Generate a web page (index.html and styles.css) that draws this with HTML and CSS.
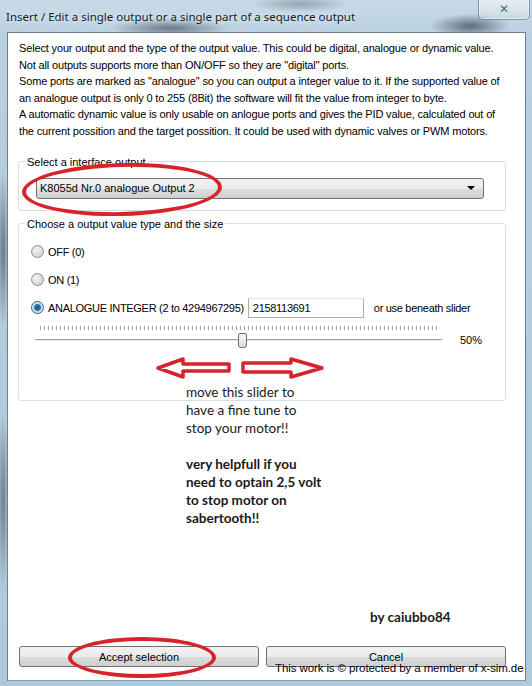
FILE: index.html
```html
<!DOCTYPE html>
<html lang="en">
<head>
  <meta charset="UTF-8" />
  <title>Insert / Edit output</title>
  <link rel="stylesheet" href="styles.css">
</head>
<body>
  <div class="window">
    <div class="titlebar">
      <span class="title">Insert / Edit a single output or a single part of a sequence output</span>
      <span class="close-btn">&#x2715;</span>
    </div>

    <div class="client">
      <p class="intro">
        Select your output and the type of the output value. This could be digital, analogue or dynamic value.<br>
        Not all outputs supports more than ON/OFF so they are "digital" ports.<br>
        Some ports are marked as "analogue" so you can output a integer value to it. If the supported value of<br>
        an analogue output is only 0 to 255 (8Bit) the software will fit the value from integer to byte.<br>
        A automatic dynamic value is only usable on anlogue ports and gives the PID value, calculated out of<br>
        the current possition and the target possition. It could be used with dynamic valves or PWM motors.
      </p>

      <fieldset class="group group-output">
        <legend>Select a interface output</legend>
        <div class="combo">
          <span>K8055d Nr.0 analogue Output 2</span>
          <span class="combo-arrow"></span>
        </div>
      </fieldset>

      <fieldset class="group group-type">
        <legend>Choose a output value type and the size</legend>
        <div class="radio-row">
          <span class="radio"></span>
          <span>OFF (0)</span>
        </div>
        <div class="radio-row">
          <span class="radio"></span>
          <span>ON (1)</span>
        </div>
        <div class="radio-row">
          <span class="radio checked"></span>
          <span>ANALOGUE INTEGER (2 to 4294967295)</span>
          <div class="textbox">2158113691</div>
          <span class="hint">or use beneath slider</span>
        </div>
        <div class="slider-row">
          <div class="slider">
            <div class="ticks"></div>
            <div class="track"></div>
            <div class="thumb"></div>
          </div>
          <span class="percent">50%</span>
        </div>
      </fieldset>

      <div class="spacer"></div>

      <div class="buttons">
        <button>Accept selection</button>
        <button>Cancel</button>
      </div>

      <!-- pasted annotations -->
      <div class="notes">
        <p>move this slider to<br>have a fine tune to<br>stop your motor!!</p>
        <p class="bold">very helpfull if you<br>need to optain 2,5 volt<br>to stop motor on<br>sabertooth!!</p>
      </div>
      <div class="signature">by caiubbo84</div>

      <svg class="arrows" width="180" height="24" viewBox="0 0 180 24">
        <polygon points="3,12 28,3 28,8 74,8 74,15 28,15 28,21" fill="#fff" stroke="#d9232b" stroke-width="3.5" stroke-linejoin="round" />
        <polygon points="88,7 136,7 136,3 167,12 136,21 136,16 88,16" fill="#fff" stroke="#d9232b" stroke-width="3.5" stroke-linejoin="round" />
      </svg>
      <div class="ring ring-combo"></div>
      <div class="ring ring-accept"></div>
    </div>

    <div class="watermark">This work is &copy; protected by a member of x-sim.de</div>
  </div>
</body>
</html>
```

FILE: styles.css
```css
body {
  margin: 0;
  font-family: 'Liberation Sans', Arial, sans-serif;
}

.window {
  position: relative;
  width: 532px;
  height: 686px;
  display: flex;
  flex-direction: column;
  overflow: hidden;
  background:
    radial-gradient(ellipse 60px 10px at 170px 28px, rgba(40,50,60,0.55), transparent),
    radial-gradient(ellipse 40px 12px at 470px 26px, rgba(30,40,50,0.6), transparent),
    radial-gradient(ellipse 50px 8px at 300px 4px, rgba(60,70,80,0.35), transparent),
    radial-gradient(ellipse 6px 80px at 3px 250px, rgba(40,50,60,0.55), transparent),
    radial-gradient(ellipse 6px 90px at 3px 500px, rgba(40,50,60,0.5), transparent),
    linear-gradient(to bottom, #c9dbe8, #b7cfe1 40px, #aec9dc);
}

.titlebar {
  height: 32px;
  flex-shrink: 0;
  position: relative;
}

.title {
  position: absolute;
  left: 6px;
  top: 9px;
  font-family: 'Noto Sans', 'Open Sans', sans-serif;
  font-size: 11.5px;
  color: #1b1b1b;
  text-shadow: 0 0 6px rgba(255,255,255,0.9);
}

.close-btn {
  position: absolute;
  left: 478px;
  top: -1px;
  width: 50px;
  height: 20px;
  border: 1px solid rgba(80,90,100,0.6);
  border-top: none;
  border-radius: 0 0 5px 5px;
  background: linear-gradient(to bottom, rgba(255,255,255,0.55), rgba(210,225,235,0.35));
  box-shadow: inset 0 0 0 1px rgba(255,255,255,0.5);
  text-align: center;
  font-family: 'DejaVu Sans', sans-serif;
  font-size: 12px;
  line-height: 20px;
  color: #5a6670;
}

.client {
  position: relative;
  flex: 1;
  margin: 0 6px 5px 7px;
  background: #ffffff;
  border: 1px solid #6f7e8a;
  border-bottom-color: #8a9aa6;
  display: flex;
  flex-direction: column;
  padding: 0 19px 13px 10px;
  font-size: 11px;
  color: #000;
}

.intro {
  margin: 7px 0 0 1px;
  line-height: 16.6px;
  letter-spacing: -0.15px;
}

.group {
  border: 1px solid #d5dfe5;
  border-radius: 3px;
  margin: 15px 0 0 0;
  box-shadow: inset 1px 1px 0 #fff;
  padding-left: 6px;
}

.group legend {
  padding: 0 2px;
  margin-left: 0;
  line-height: 14px;
}

.group-output {
  padding: 9px 21px 11px 6px;
}

.group-output .combo {
  margin-left: 11px;
}

.group-type {
  margin-top: 6px;
  padding: 11px 21px 48px 6px;
}

.combo {
  height: 19px;
  border: 1px solid #707070;
  border-radius: 3px;
  background: linear-gradient(to bottom, #f2f2f2 0%, #ebebeb 50%, #dddddd 51%, #cfcfcf 100%);
  display: flex;
  align-items: center;
  justify-content: space-between;
  padding: 0 8px 0 3px;
}

.combo-arrow {
  width: 0;
  height: 0;
  border-left: 4px solid transparent;
  border-right: 4px solid transparent;
  border-top: 4px solid #000;
}

.radio-row {
  display: flex;
  align-items: center;
  height: 20px;
  margin: 0 0 8px 6px;
  white-space: nowrap;
  letter-spacing: -0.3px;
}

.radio {
  width: 11px;
  height: 11px;
  border: 1px solid #8e8f8f;
  border-radius: 50%;
  background: radial-gradient(circle at 40% 40%, #f4f4f4, #c9c9c9);
  margin-right: 4px;
  flex-shrink: 0;
}

.radio.checked {
  background: radial-gradient(circle, #1b4a6c 0, #2e7bb0 3px, #bfd6e6 4px, #e8eef2 6px);
  border-color: #2c628b;
}

.textbox {
  width: 110px;
  height: 18px;
  border: 1px solid #abadb3;
  border-top-color: #e3e9ef;
  margin-left: 4px;
  padding-left: 4px;
  line-height: 18px;
  flex-shrink: 0;
}

.hint {
  margin-left: 10px;
}

.slider-row {
  display: flex;
  align-items: center;
  margin-top: -4px;
  margin-left: 10px;
}

.slider {
  position: relative;
  width: 407px;
  height: 30px;
}

.ticks {
  position: absolute;
  left: 5px;
  right: 4px;
  top: 4px;
  height: 4px;
  background: repeating-linear-gradient(to right, #a3a3a3 0, #a3a3a3 1px, transparent 1px, transparent 4px);
}

.track {
  position: absolute;
  left: 0;
  right: 0;
  top: 17px;
  height: 1px;
  background: #a0a0a0;
  border-bottom: 1px solid #e7e7e7;
}

.thumb {
  position: absolute;
  left: 203px;
  top: 11px;
  width: 7px;
  height: 13px;
  border: 1px solid #707070;
  border-radius: 2px 2px 3px 3px;
  background: linear-gradient(to bottom, #f6f6f6, #dcdcdc);
}

.percent {
  margin-left: 18px;
  padding-top: 6px;
}

.spacer {
  flex: 1;
}

.buttons {
  display: flex;
  gap: 7px;
  margin-left: 1px;
}

.buttons button {
  flex: 1;
  height: 21px;
  border: 1px solid #707070;
  border-radius: 3px;
  background: linear-gradient(to bottom, #f2f2f2 0%, #ebebeb 50%, #dddddd 51%, #cfcfcf 100%);
  font-family: 'Liberation Sans', Arial, sans-serif;
  font-size: 11px;
  color: #000;
  padding: 0;
}

.notes {
  position: absolute;
  left: 178px;
  top: 350px;
  font-family: Lato, 'Open Sans', sans-serif;
  font-size: 13.5px;
  line-height: 18px;
  color: #1a1a1a;
}

.notes p {
  margin: 0 0 18px 0;
}

.notes .bold {
  font-weight: bold;
}

.signature {
  position: absolute;
  left: 362px;
  top: 576px;
  font-family: Lato, 'Open Sans', sans-serif;
  font-size: 13.5px;
  font-weight: bold;
  color: #1a1a1a;
}

.arrows {
  position: absolute;
  left: 147px;
  top: 323px;
}

.ring {
  position: absolute;
  border: 4px solid #d9232b;
  border-radius: 50%;
}

.ring-combo {
  left: 14px;
  top: 130px;
  width: 192px;
  height: 45px;
  transform: rotate(-1.5deg);
}

.ring-accept {
  left: 60px;
  top: 604px;
  width: 140px;
  height: 33px;
}

.watermark {
  position: absolute;
  left: 275px;
  top: 662px;
  font-size: 11.5px;
  color: #000;
  letter-spacing: -0.1px;
}
```
